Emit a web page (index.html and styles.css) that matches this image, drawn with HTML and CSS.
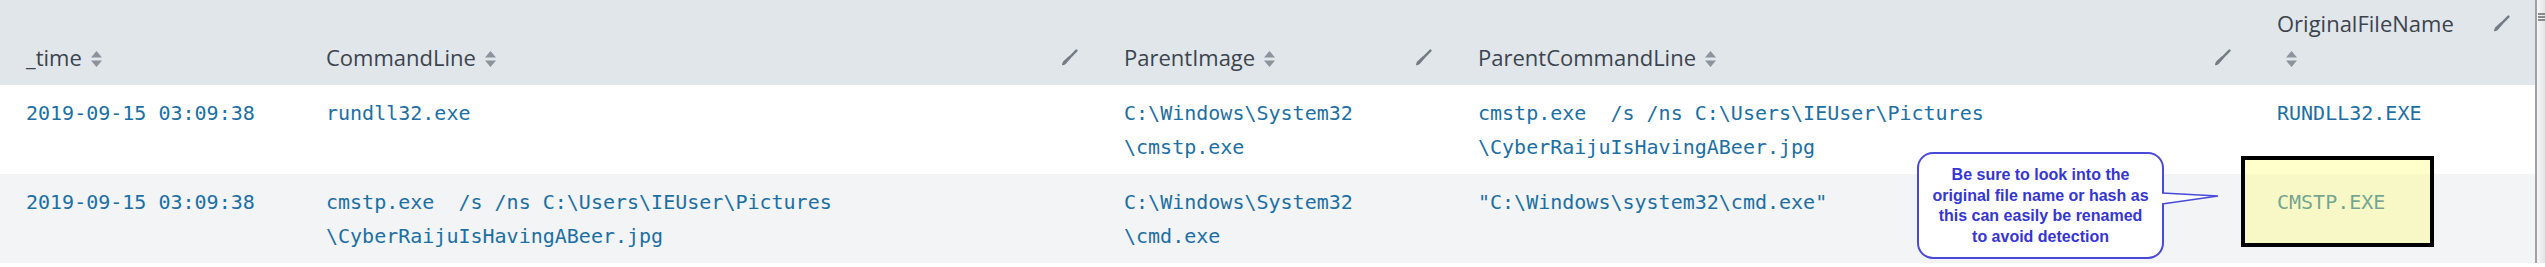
FILE: index.html
```html
<!DOCTYPE html>
<html lang="en">
<head>
    <meta charset="UTF-8">
    <title>Events</title>
    <link rel="stylesheet" href="styles.css">
</head>
<body>
    <div class="page">
        <table class="results">
            <colgroup>
                <col class="c-time">
                <col class="c-cmd">
                <col class="c-pimg">
                <col class="c-pcmd">
                <col class="c-orig">
            </colgroup>
            <thead>
                <tr>
                    <th>
                        <div class="th-inner">
                            <span class="th-label">_time<svg class="sort" viewBox="0 0 11 16"><path d="M0 6.5 L5.5 0 L11 6.5Z M0 9.5 L5.5 16 L11 9.5Z"/></svg></span>
                        </div>
                    </th>
                    <th>
                        <div class="th-inner">
                            <span class="th-label">CommandLine<svg class="sort" viewBox="0 0 11 16"><path d="M0 6.5 L5.5 0 L11 6.5Z M0 9.5 L5.5 16 L11 9.5Z"/></svg></span>
                            <span class="brush"><svg viewBox="0 0 18 18"><path class="handle" d="M16.3 1.7 L9.5 8.5"/><path d="M8.2 7.8 L10.3 9.9 L5.2 15.6 Q2.6 17.8 1 17.2 Q0.6 15.4 2.6 13 Z"/></svg></span>
                        </div>
                    </th>
                    <th>
                        <div class="th-inner">
                            <span class="th-label">ParentImage<svg class="sort" viewBox="0 0 11 16"><path d="M0 6.5 L5.5 0 L11 6.5Z M0 9.5 L5.5 16 L11 9.5Z"/></svg></span>
                            <span class="brush"><svg viewBox="0 0 18 18"><path class="handle" d="M16.3 1.7 L9.5 8.5"/><path d="M8.2 7.8 L10.3 9.9 L5.2 15.6 Q2.6 17.8 1 17.2 Q0.6 15.4 2.6 13 Z"/></svg></span>
                        </div>
                    </th>
                    <th>
                        <div class="th-inner">
                            <span class="th-label">ParentCommandLine<svg class="sort" viewBox="0 0 11 16"><path d="M0 6.5 L5.5 0 L11 6.5Z M0 9.5 L5.5 16 L11 9.5Z"/></svg></span>
                            <span class="brush"><svg viewBox="0 0 18 18"><path class="handle" d="M16.3 1.7 L9.5 8.5"/><path d="M8.2 7.8 L10.3 9.9 L5.2 15.6 Q2.6 17.8 1 17.2 Q0.6 15.4 2.6 13 Z"/></svg></span>
                        </div>
                    </th>
                    <th class="last">
                        <div class="th-inner">
                            <span class="th-label narrow">OriginalFileName<svg class="sort" viewBox="0 0 11 16"><path d="M0 6.5 L5.5 0 L11 6.5Z M0 9.5 L5.5 16 L11 9.5Z"/></svg></span>
                            <span class="brush"><svg viewBox="0 0 18 18"><path class="handle" d="M16.3 1.7 L9.5 8.5"/><path d="M8.2 7.8 L10.3 9.9 L5.2 15.6 Q2.6 17.8 1 17.2 Q0.6 15.4 2.6 13 Z"/></svg></span>
                        </div>
                    </th>
                </tr>
            </thead>
            <tbody>
                <tr>
                    <td>2019-09-15 03:09:38</td>
                    <td>rundll32.exe</td>
                    <td>C:<wbr>\Windows<wbr>\System32<wbr>\cmstp.exe</td>
                    <td>cmstp.exe  /s /ns C:<wbr>\Users<wbr>\IEUser<wbr>\Pictures<wbr>\CyberRaijuIsHavingABeer.jpg</td>
                    <td class="last">RUNDLL32.EXE</td>
                </tr>
                <tr class="alt">
                    <td>2019-09-15 03:09:38</td>
                    <td>cmstp.exe  /s /ns C:<wbr>\Users<wbr>\IEUser<wbr>\Pictures<wbr>\CyberRaijuIsHavingABeer.jpg</td>
                    <td>C:<wbr>\Windows<wbr>\System32<wbr>\cmd.exe</td>
                    <td>"C:\Windows\system32\cmd.exe"</td>
                    <td class="last">CMSTP.EXE</td>
                </tr>
            </tbody>
        </table>
        <div class="scroll-strip">
            <span class="grip"></span>
        </div>

        <!-- annotation overlays -->
        <div class="highlight"></div>
        <div class="callout">
            Be sure to look into the<br>
            original file name or hash as<br>
            this can easily be renamed<br>
            to avoid detection
        </div>
        <svg class="callout-tail" viewBox="0 0 58 22"><polygon class="tail-fill" points="0,5 56,8 0,16"/><polyline class="tail-line" points="0,5 56,8 0,16"/></svg>
    </div>
</body>
</html>
```

FILE: styles.css
```css
body {
    margin: 0;
    background: #fff;
}
.page {
    position: relative;
    display: flex;
    width: 2545px;
    height: 267px;
}
.results {
    width: 2535px;
    table-layout: fixed;
    border-collapse: collapse;
    border-spacing: 0;
    flex-shrink: 0;
    align-self: flex-start;
}
.c-time { width: 300px; }
.c-cmd { width: 798px; }
.c-pimg { width: 354px; }
.c-pcmd { width: 799px; }
.c-orig { width: 284px; }

.results thead tr {
    height: 85px;
}
.results th {
    padding: 0 20px 11px 26px;
    background: #e1e6eb;
    vertical-align: bottom;
    text-align: left;
    font-family: "Open Sans", sans-serif;
    font-weight: normal;
    font-size: 22px;
    color: #3c444d;
}
.results th.last {
    padding-right: 25px;
}
.th-inner {
    display: flex;
    justify-content: space-between;
    align-items: flex-start;
}
.th-label {
    line-height: 34px;
}
.th-label.narrow {
    max-width: 190px;
}
.sort {
    display: inline-block;
    width: 11px;
    height: 16px;
    margin-left: 9px;
    vertical-align: -1px;
    fill: #8c939b;
}
.brush {
    height: 34px;
    display: flex;
    align-items: center;
    flex-shrink: 0;
}
.brush svg {
    width: 17px;
    height: 17px;
    fill: #737b84;
}
.brush .handle {
    fill: none;
    stroke: #737b84;
    stroke-width: 2.6;
    stroke-linecap: round;
}

.results tbody tr {
    height: 89px;
    background: #fff;
}
.results tbody tr.alt {
    background: #f2f4f5;
}
.results td {
    padding: 11px 20px 10px 26px;
    vertical-align: top;
    font-family: "DejaVu Sans Mono", monospace;
    font-size: 20px;
    line-height: 34px;
    color: #1d6fa2;
    white-space: pre-wrap;
}
.results td.last {
    padding-right: 25px;
}

.scroll-strip {
    flex: 1;
    height: 263px;
    border-left: 2px solid #9ea2a6;
    background: linear-gradient(to right, #f6f6f6, #e4e4e4);
    position: relative;
}
.grip {
    position: absolute;
    left: 1px;
    top: 13px;
    width: 7px;
    height: 8px;
    border-top: 2px solid #8a8a8a;
    border-bottom: 2px solid #8a8a8a;
    box-sizing: border-box;
}
.grip::after {
    content: "";
    position: absolute;
    left: 0;
    right: 0;
    top: 1px;
    border-top: 2px solid #8a8a8a;
}

.highlight {
    position: absolute;
    left: 2241px;
    top: 156px;
    width: 193px;
    height: 91px;
    box-sizing: border-box;
    border: 4px solid #000;
    background: rgba(255, 255, 120, 0.38);
}
.callout {
    position: absolute;
    left: 1917px;
    top: 152px;
    width: 247px;
    height: 107px;
    box-sizing: border-box;
    padding-top: 11px;
    border: 2px solid #4a4ad8;
    border-radius: 16px;
    background: #fff;
    text-align: center;
    font-family: "Liberation Sans", Arial, sans-serif;
    font-weight: bold;
    font-size: 16px;
    line-height: 20.5px;
    color: #3535d2;
}
.callout-tail {
    position: absolute;
    left: 2162px;
    top: 188px;
    width: 58px;
    height: 22px;
    overflow: visible;
}
.tail-fill {
    fill: #fff;
}
.tail-line {
    fill: none;
    stroke: #4a4ad8;
    stroke-width: 1.6;
}
```
